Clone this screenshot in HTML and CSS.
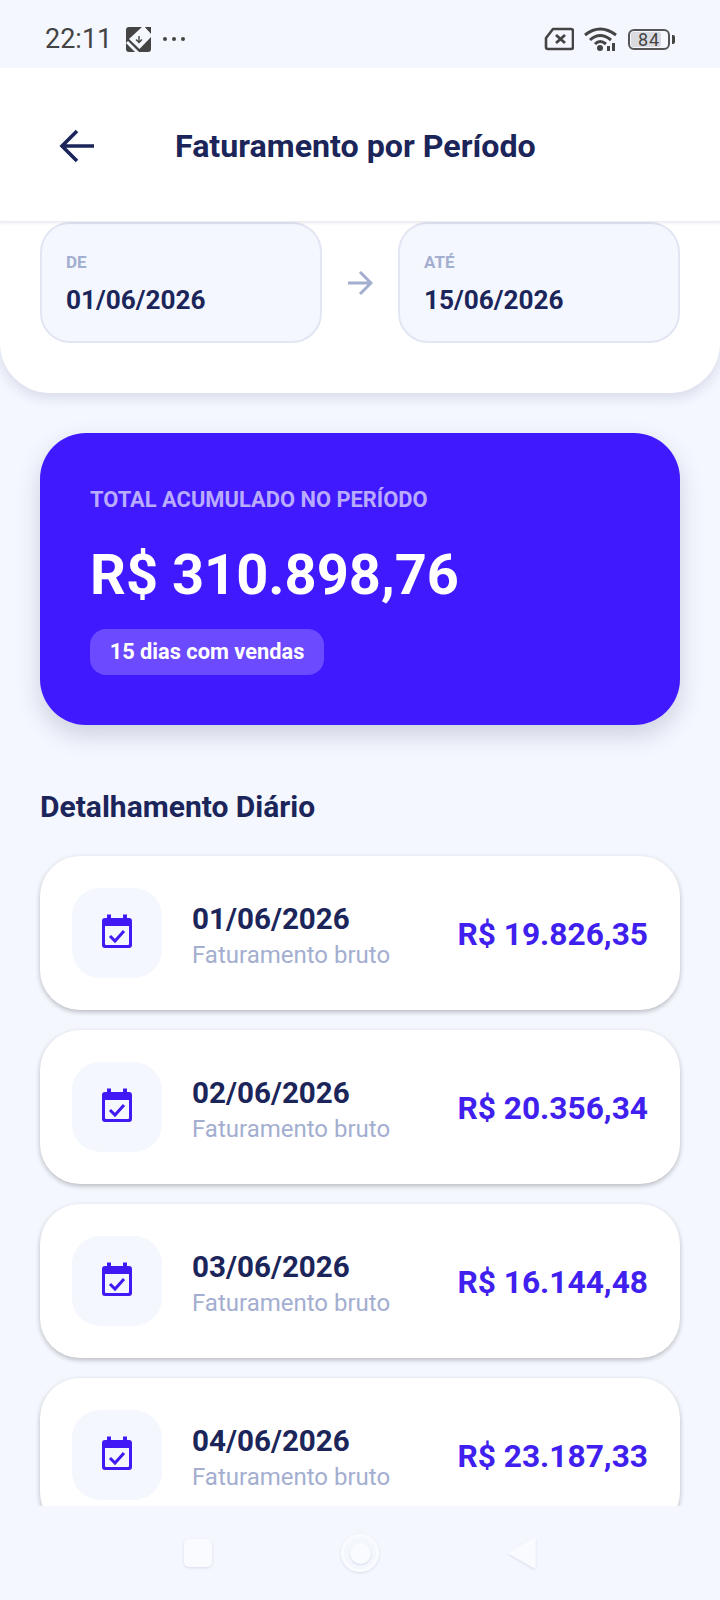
FILE: index.html
```html
<html>
	<head>
		<title>Faturamento por Período</title>
		<meta charset="utf-8"/>
		<meta name="viewport" content="width=device-width, initial-scale=1">
		<link rel="stylesheet" href="styles.css">
	</head>
	<body>
		<div class="phone">
			<div class="statusbar">
				<div class="status-left">
					<span class="clock">22:11</span>
					<svg class="app-icon" width="25" height="25" viewBox="0 0 25 25">
						<rect width="25" height="25" rx="3" fill="#444"/>
						<path d="M16 0 L19 0 L25 7 L25 10 L13.500 22 L3 12 Z" fill="#f4f7fe"/>
						<path d="M19 0 L25 0 L25 6 Z" fill="#444"/>
						<path d="M0 16 L2 14 L13 25 L9 25 Z" fill="#f4f7fe"/>
						<path d="M13 9 V15 M10 12.500 L13 15.500 L16 12.500" fill="none" stroke="#444" stroke-width="1.400"/>
					</svg>
					<span class="dots"><i></i><i></i><i></i></span>
				</div>
				<div class="status-right">
					<svg width="30" height="24" viewBox="0 0 30 24">
						<path d="M9 2 H27 Q29 2 29 4 V20 Q29 22 27 22 H4 Q2 22 2 20 V11 Z" fill="none" stroke="#444" stroke-width="2.600" stroke-linejoin="round"/>
						<path d="M12 8 L21 16 M21 8 L12 16" stroke="#444" stroke-width="2.800"/>
					</svg>
					<svg class="wifi" width="34" height="26" viewBox="0 0 34 26">
						<path d="M1 9 Q16 -3 32 9" fill="none" stroke="#444" stroke-width="3"/>
						<path d="M6 14 Q16 5 27 14" fill="none" stroke="#444" stroke-width="3"/>
						<path d="M11 18 Q16 13 22 18" fill="none" stroke="#444" stroke-width="3"/>
						<circle cx="16" cy="22" r="3" fill="#444"/>
						<path d="M23 20 L26 20 L26 25 L23 25 Z M28 17 L31 17 L31 25 L28 25 Z" fill="#444"/>
					</svg>
					<div class="battery">
						<div class="battery-body"><div class="battery-fill" style="width: 84%"></div><span>84</span></div>
						<div class="battery-tip"></div>
					</div>
				</div>
			</div>

			<div class="header">
				<svg class="back" width="36" height="34" viewBox="0 0 36 34">
					<path d="M18 2 L3 17 L18 32 M3 17 H35" fill="none" stroke="#1b2559" stroke-width="3.600"/>
				</svg>
				<div class="title">Faturamento por Período</div>
			</div>

			<div class="content">
				<div class="sheet">
					<div class="datebox">
						<div class="datebox-label">DE</div>
						<div class="datebox-value">01/06/2026</div>
					</div>
					<svg class="range-arrow" width="26" height="24" viewBox="0 0 26 24">
						<path d="M13 1 L24 12 L13 23 M24 12 H1" fill="none" stroke="#a3aed0" stroke-width="3"/>
					</svg>
					<div class="datebox">
						<div class="datebox-label">ATÉ</div>
						<div class="datebox-value">15/06/2026</div>
					</div>
				</div>

				<div class="total">
					<div class="total-label">TOTAL ACUMULADO NO PERÍODO</div>
					<div class="total-value">R$ 310.898,76</div>
					<div class="pill">15 dias com vendas</div>
				</div>

				<div class="section-title">Detalhamento Diário</div>

				<div class="list">
					<div class="row">
						<div class="row-icon">
							<svg width="30" height="34" viewBox="0 0 30 34"><path class="cal" d="M3 4 H5 V0.500 H9 V4 H21 V0.500 H25 V4 H27 Q30 4 30 7 V31 Q30 34 27 34 H3 Q0 34 0 31 V7 Q0 4 3 4 Z M3 12 V30 Q3 31 4 31 H26 Q27 31 27 30 V12 Z"/><path class="check" d="M8 22 L13 27 L22 17"/></svg>
						</div>
						<div class="row-text">
							<div class="row-date">01/06/2026</div>
							<div class="row-sub">Faturamento bruto</div>
						</div>
						<div class="row-value">R$ 19.826,35</div>
					</div>
					<div class="row">
						<div class="row-icon">
							<svg width="30" height="34" viewBox="0 0 30 34"><path class="cal" d="M3 4 H5 V0.500 H9 V4 H21 V0.500 H25 V4 H27 Q30 4 30 7 V31 Q30 34 27 34 H3 Q0 34 0 31 V7 Q0 4 3 4 Z M3 12 V30 Q3 31 4 31 H26 Q27 31 27 30 V12 Z"/><path class="check" d="M8 22 L13 27 L22 17"/></svg>
						</div>
						<div class="row-text">
							<div class="row-date">02/06/2026</div>
							<div class="row-sub">Faturamento bruto</div>
						</div>
						<div class="row-value">R$ 20.356,34</div>
					</div>
					<div class="row">
						<div class="row-icon">
							<svg width="30" height="34" viewBox="0 0 30 34"><path class="cal" d="M3 4 H5 V0.500 H9 V4 H21 V0.500 H25 V4 H27 Q30 4 30 7 V31 Q30 34 27 34 H3 Q0 34 0 31 V7 Q0 4 3 4 Z M3 12 V30 Q3 31 4 31 H26 Q27 31 27 30 V12 Z"/><path class="check" d="M8 22 L13 27 L22 17"/></svg>
						</div>
						<div class="row-text">
							<div class="row-date">03/06/2026</div>
							<div class="row-sub">Faturamento bruto</div>
						</div>
						<div class="row-value">R$ 16.144,48</div>
					</div>
					<div class="row">
						<div class="row-icon">
							<svg width="30" height="34" viewBox="0 0 30 34"><path class="cal" d="M3 4 H5 V0.500 H9 V4 H21 V0.500 H25 V4 H27 Q30 4 30 7 V31 Q30 34 27 34 H3 Q0 34 0 31 V7 Q0 4 3 4 Z M3 12 V30 Q3 31 4 31 H26 Q27 31 27 30 V12 Z"/><path class="check" d="M8 22 L13 27 L22 17"/></svg>
						</div>
						<div class="row-text">
							<div class="row-date">04/06/2026</div>
							<div class="row-sub">Faturamento bruto</div>
						</div>
						<div class="row-value">R$ 23.187,33</div>
					</div>
				</div>
			</div>

			<div class="navbar">
				<div class="nav-square"></div>
				<div class="nav-circle"><div class="nav-dot"></div></div>
				<svg class="nav-back" width="28" height="34" viewBox="0 0 28 34"><path d="M27 2 V32 L1 17 Z" fill="#fafbff" stroke="#fafbff" stroke-width="1.500" stroke-linejoin="round"/></svg>
			</div>
		</div>
	</body>
</html>
```

FILE: styles.css
```css
* {
	box-sizing: border-box;
}

body {
	margin: 0;
	background-color: #f4f7fe;
	font-family: Roboto, "Liberation Sans", sans-serif;
}

.phone {
	width: 720px;
	height: 1600px;
	display: flex;
	flex-direction: column;
	overflow: hidden;
}

.statusbar {
	height: 68px;
	flex-shrink: 0;
	padding: 10px 45px 0 45px;
	display: flex;
	align-items: center;
	justify-content: space-between;
	color: #444;
}

.status-left {
	display: flex;
	align-items: center;
}

.clock {
	font-size: 27px;
}

.app-icon {
	margin-left: 14px;
}

.dots {
	display: flex;
	gap: 5px;
	margin-left: 12px;
}

.dots i {
	width: 4px;
	height: 4px;
	border-radius: 50%;
	background-color: #444;
}

.status-right {
	display: flex;
	align-items: center;
	gap: 10px;
}

.battery {
	display: flex;
	align-items: center;
	gap: 2px;
}

.battery-body {
	width: 42px;
	height: 21px;
	border: 2px solid #555;
	border-radius: 6px;
	padding: 1px;
	position: relative;
}

.battery-fill {
	height: 100%;
	background-color: #d9dbe0;
	border-radius: 2px;
}

.battery-body span {
	position: absolute;
	left: 0;
	right: 0;
	top: 0;
	text-align: center;
	font-size: 18px;
	line-height: 17px;
	letter-spacing: 1px;
	color: #444;
}

.battery-tip {
	width: 3px;
	height: 9px;
	border-radius: 0 2px 2px 0;
	background-color: #444;
}

.header {
	height: 154px;
	flex-shrink: 0;
	background-color: white;
	border-bottom: 1px solid #ececf2;
	box-shadow: 0 2px 2px rgba(27,37,89,0.06);
	display: flex;
	align-items: center;
	padding-left: 59px;
	padding-top: 3px;
	position: relative;
	z-index: 2;
}

.title {
	margin-left: 80px;
	font-size: 32.2px;
	font-weight: 700;
	color: #1b2559;
}

.content {
	flex: 1;
	min-height: 0;
	overflow: hidden;
}

.sheet {
	height: 171px;
	background-color: white;
	border-radius: 0 0 50px 50px;
	box-shadow: 0 4px 14px rgba(27,37,89,0.14);
	padding: 0 40px;
	display: flex;
	align-items: flex-start;
	justify-content: space-between;
}

.datebox {
	width: 282px;
	height: 121px;
	background-color: #f4f7fe;
	border: 2px solid #e2e6f3;
	border-radius: 30px;
	padding: 28px 24px 0;
}

.datebox-label {
	font-size: 17px;
	font-weight: 700;
	line-height: 20px;
	color: #a3aed0;
}

.datebox-value {
	margin-top: 12px;
	font-size: 26.2px;
	font-weight: 700;
	line-height: 32px;
	color: #1b2559;
}

.range-arrow {
	margin-top: 49px;
}

.total {
	margin: 40px 40px 0;
	height: 292px;
	background-color: #4119ff;
	border-radius: 46px;
	box-shadow: 0 10px 24px rgba(27,37,89,0.18);
	padding: 55px 50px 0;
	color: white;
}

.total-label {
	font-size: 21.9px;
	font-weight: 700;
	line-height: 24px;
	color: #b9acff;
}

.total-value {
	margin-top: 30px;
	font-size: 56px;
	font-weight: 700;
	line-height: 66px;
}

.pill {
	margin-top: 21px;
	width: 234px;
	height: 46px;
	border-radius: 16px;
	background-color: #6c4aff;
	font-size: 21.8px;
	font-weight: 700;
	line-height: 46px;
	text-align: center;
}

.section-title {
	margin: 65px 40px 0;
	font-size: 30px;
	font-weight: 700;
	line-height: 34px;
	color: #1b2559;
}

.list {
	margin: 32px 40px 0;
	display: flex;
	flex-direction: column;
	gap: 20px;
}

.row {
	height: 154px;
	flex-shrink: 0;
	background-color: white;
	border-radius: 40px;
	box-shadow: 0 2px 5px rgba(0,0,0,0.25);
	padding: 0 32px;
	display: flex;
	align-items: center;
}

.row-icon {
	width: 90px;
	height: 90px;
	border-radius: 28px;
	background-color: #f4f7fe;
	display: flex;
	align-items: center;
	justify-content: center;
	flex-shrink: 0;
	padding-bottom: 4px;
}

.cal {
	fill: #4119f5;
	fill-rule: evenodd;
}

.check {
	fill: none;
	stroke: #4119f5;
	stroke-width: 3;
}

.row-text {
	margin-left: 30px;
	flex: 1;
	padding-top: 4px;
}

.row-date {
	font-size: 29.6px;
	font-weight: 700;
	line-height: 34px;
	color: #1b2559;
}

.row-sub {
	margin-top: 6px;
	font-size: 24px;
	line-height: 27px;
	color: #a3aed0;
}

.row-value {
	padding-top: 2px;
	font-size: 31.7px;
	font-weight: 700;
	color: #4020ee;
}

.navbar {
	height: 94px;
	flex-shrink: 0;
	background-color: #f4f7fe;
	position: relative;
	z-index: 2;
	display: flex;
	align-items: center;
	justify-content: center;
	gap: 129px;
}

.nav-square {
	width: 28px;
	height: 28px;
	border-radius: 5px;
	background-color: #fafbff;
	box-shadow: 0 1px 3px rgba(27,37,89,0.12);
}

.nav-circle {
	width: 38px;
	height: 38px;
	border-radius: 50%;
	border: 3px solid #fafbff;
	box-shadow: 0 1px 3px rgba(27,37,89,0.12);
	display: flex;
	align-items: center;
	justify-content: center;
}

.nav-dot {
	width: 21px;
	height: 21px;
	border-radius: 50%;
	background-color: #fafbff;
	box-shadow: 0 1px 2px rgba(27,37,89,0.14);
}

.nav-back {
	filter: drop-shadow(0 1px 1px rgba(27,37,89,0.12));
}
```
